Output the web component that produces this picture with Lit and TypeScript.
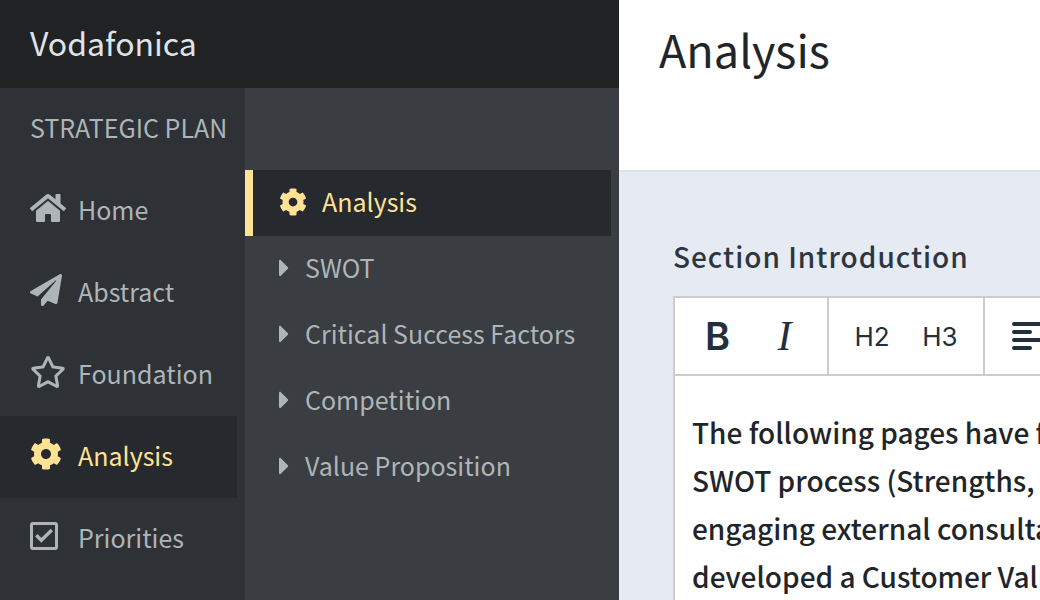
import { LitElement, html, svg, css } from "lit";
import { customElement, property } from "lit/decorators.js";
import { classMap } from "lit/directives/class-map.js";

const icons = {
  home: {
    box: "0 0 576 512",
    shape: svg`<path d="M280.37 148.26L96 300.11V464a16 16 0 0 0 16 16l112.06-.29a16 16 0 0 0 15.92-16V368a16 16 0 0 1 16-16h64a16 16 0 0 1 16 16v95.64a16 16 0 0 0 16 16.05L464 480a16 16 0 0 0 16-16V300L295.67 148.26a12.19 12.19 0 0 0-15.3 0zM571.6 251.47L488 182.56V44.05a12 12 0 0 0-12-12h-56a12 12 0 0 0-12 12v72.61L318.47 43a48 48 0 0 0-61 0L4.34 251.47a12 12 0 0 0-1.6 16.9l25.5 31A12 12 0 0 0 45.15 301l235.22-193.74a12.19 12.19 0 0 1 15.3 0L530.9 301a12 12 0 0 0 16.9-1.6l25.5-31a12 12 0 0 0-1.7-16.93z"/>`,
  },
  plane: {
    box: "0 0 512 512",
    shape: svg`<path d="M476 3.2L12.5 270.6c-18.1 10.4-15.8 35.6 2.2 43.2L121 358.4l287.3-253.2c5.5-4.9 13.3 2.6 8.6 8.3L176 407v80.5c0 23.6 28.5 32.9 42.5 15.8L282 426l124.6 52.2c14.2 6 30.4-2.9 33-18.2l72-432C515 7.8 493.3-6.8 476 3.2z"/>`,
  },
  star: {
    box: "0 0 576 512",
    shape: svg`<path d="M528.1 171.5L382 150.2 316.7 17.8c-11.7-23.6-45.6-23.9-57.4 0L194 150.2 47.9 171.5c-26.2 3.8-36.7 36.1-17.7 54.6l105.7 103-25 145.5c-4.5 26.3 23.2 46 46.4 33.7L288 439.6l130.7 68.7c23.2 12.2 50.9-7.4 46.4-33.7l-25-145.5 105.7-103c19-18.5 8.5-50.8-17.7-54.6zM388.6 312.3l23.7 138.4L288 385.4l-124.3 65.3 23.7-138.4-100.6-98 139-20.2 62.2-126 62.2 126 139 20.2-100.6 98z"/>`,
  },
  cog: {
    box: "0 0 512 512",
    shape: svg`<path d="M487.4 315.7l-42.6-24.6c4.3-23.2 4.3-47 0-70.2l42.6-24.6c4.9-2.8 7.1-8.6 5.5-14-11.1-35.6-30-67.8-54.7-94.6-3.8-4.1-10-5.1-14.8-2.3L380.8 110c-17.9-15.4-38.5-27.3-60.8-35.1V25.8c0-5.6-3.9-10.5-9.4-11.7-36.7-8.2-74.3-7.8-109.2 0-5.5 1.2-9.4 6.1-9.4 11.7V75c-22.2 7.9-42.8 19.8-60.8 35.1L88.7 85.5c-4.9-2.8-11-1.9-14.8 2.3-24.7 26.7-43.6 58.9-54.7 94.6-1.7 5.4.6 11.2 5.5 14L67.3 221c-4.3 23.2-4.3 47 0 70.2l-42.6 24.6c-4.9 2.8-7.1 8.6-5.5 14 11.1 35.6 30 67.8 54.7 94.6 3.8 4.1 10 5.1 14.8 2.3l42.6-24.6c17.9 15.4 38.5 27.3 60.8 35.1v49.2c0 5.6 3.9 10.5 9.4 11.7 36.7 8.2 74.3 7.8 109.2 0 5.5-1.2 9.4-6.1 9.4-11.7v-49.2c22.2-7.9 42.8-19.8 60.8-35.1l42.6 24.6c4.9 2.8 11 1.9 14.8-2.3 24.7-26.7 43.6-58.9 54.7-94.6 1.5-5.5-.7-11.3-5.6-14.1zM256 336c-44.1 0-80-35.9-80-80s35.9-80 80-80 80 35.9 80 80-35.9 80-80 80z"/>`,
  },
  check: {
    box: "0 0 32 32",
    shape: svg`<g fill="none" stroke="currentColor" stroke-width="3"><rect x="1.5" y="3.5" width="25" height="25" rx="1.5"/><path d="M6.3 15.3l5 5L21.8 10" stroke-width="3.4"/></g>`,
  },
  caret: {
    box: "0 0 192 512",
    shape: svg`<path d="M0 384.662V127.338c0-17.818 21.543-26.741 34.142-14.142l128.662 128.662c7.81 7.81 7.81 20.474 0 28.284L34.142 398.804C21.543 411.404 0 402.48 0 384.662z"/>`,
  },
  left: {
    box: "0 0 32 28",
    shape: svg`<path fill="none" stroke="currentColor" stroke-width="4" stroke-linecap="round" d="M2 2h28M2 10h16M2 18h28M2 26h16"/>`,
  },
};

type IconName = keyof typeof icons;

@customElement("app-icon")
class AppIcon extends LitElement {
  @property() name: IconName = "home";

  static styles = css`
    :host {
      display: block;
      height: 32px;
    }
    .glyph {
      display: block;
      height: 100%;
      width: auto;
      fill: currentColor;
    }
  `;

  render() {
    const icon = icons[this.name];
    return html`<svg class="glyph" viewBox=${icon.box} aria-hidden="true">${icon.shape}</svg>`;
  }
}

const sections: { label: string; icon: IconName; active?: boolean }[] = [
  { label: "Home", icon: "home" },
  { label: "Abstract", icon: "plane" },
  { label: "Foundation", icon: "star" },
  { label: "Analysis", icon: "cog", active: true },
  { label: "Priorities", icon: "check" },
];

const pages: { label: string; active?: boolean }[] = [
  { label: "Analysis", active: true },
  { label: "SWOT" },
  { label: "Critical Success Factors" },
  { label: "Competition" },
  { label: "Value Proposition" },
];

const introduction = [
  "The following pages have followed a",
  "SWOT process (Strengths, Weaknesses),",
  "engaging external consultants, and",
  "developed a Customer Value Proposition.",
].join("\n");

@customElement("app-root")
class AppRoot extends LitElement {
  static styles = css`
    :host {
      display: grid;
      grid-template-columns: auto minmax(0, 1fr);
      height: 100vh;
      overflow: hidden;
      font-family: "Noto Sans CJK SC", "Noto Sans", sans-serif;
      font-size: 25px;
      line-height: 40px;
      color: #212529;
    }
    * {
      box-sizing: border-box;
    }
    .side {
      display: grid;
      grid-template-columns: 245px 374px;
      grid-template-rows: 88px 1fr;
      min-height: 0;
      color: #adb5b9;
    }
    .brand {
      grid-column: 1 / -1;
      display: flex;
      align-items: center;
      padding: 0 30px 4px;
      background: #212223;
      color: #dee4e7;
      font-size: 32px;
      text-decoration: none;
    }
    .sections {
      background: #2e3136;
    }
    .pages {
      background: #3a3d41;
      padding-top: 82px;
    }
    .caption {
      margin: 0;
      padding: 19px 0 23px 30px;
      font-size: 25px;
      font-weight: 400;
      white-space: nowrap;
    }
    .list {
      list-style: none;
      margin: 0;
      padding: 0 8px 0 0;
    }
    .link {
      display: flex;
      align-items: center;
      padding-bottom: 4px;
      color: inherit;
      text-decoration: none;
      white-space: nowrap;
    }
    .section {
      height: 82px;
      padding-left: 30px;
    }
    .section .mark {
      width: 48px;
      padding-bottom: 2px;
    }
    .page {
      height: 66px;
      padding-left: 26px;
      border-left: 8px solid transparent;
    }
    .page .mark {
      width: 26px;
      padding-top: 2px;
    }
    .page.active .mark {
      width: 43px;
    }
    .page app-icon {
      height: 28px;
    }
    .active {
      background: #26292e;
      border-color: #ffe294;
      color: #ffe294;
    }
    .main {
      display: flex;
      flex-direction: column;
      min-width: 0;
      min-height: 0;
      overflow: hidden;
      background: #e6eaf2;
    }
    .top {
      height: 172px;
      flex: none;
      padding: 19px 40px;
      background: #fff;
      border-bottom: 2px solid #dee2e6;
    }
    .title {
      margin: 0;
      font-size: 45px;
      line-height: 60px;
      font-weight: 400;
    }
    .content {
      flex: 1;
      display: flex;
      flex-direction: column;
      min-width: 720px;
      padding: 64px 54px 0;
    }
    .label {
      padding-bottom: 20px;
      font-size: 28px;
      font-weight: 500;
      letter-spacing: 1px;
      color: #2d3640;
    }
    .editor {
      flex: 1;
      display: flex;
      flex-direction: column;
      border: 2px solid #ccc;
      border-bottom: 0;
      background: #fff;
    }
    .toolbar {
      display: flex;
      height: 78px;
      flex: none;
      border-bottom: 2px solid #ccc;
      color: #232f3f;
    }
    .group {
      display: flex;
      align-items: stretch;
      padding: 0 9px;
      border-right: 2px solid #ccc;
    }
    .tool {
      display: flex;
      align-items: center;
      justify-content: center;
      width: 68px;
      padding: 0;
      border: 0;
      background: none;
      color: inherit;
      font: 26px Inter, sans-serif;
    }
    .bold {
      width: 67px;
      font: 600 38px Inter, sans-serif;
    }
    .italic {
      width: 67px;
      font: italic 42px "Liberation Serif", serif;
    }
    .tool app-icon {
      height: 28px;
    }
    .text {
      flex: 1;
      width: 100%;
      padding: 32px 17px 0;
      border: 0;
      outline: 0;
      resize: none;
      overflow: hidden;
      background: none;
      color: inherit;
      font: inherit;
      font-size: 28px;
      font-weight: 500;
      line-height: 48px;
    }
  `;

  render() {
    return html`
      <div class="side">
        <a class="brand" href="#">Vodafonica</a>
        <nav class="sections" aria-label="Strategic plan">
          <h2 class="caption">STRATEGIC PLAN</h2>
          <ul class="list">
            ${sections.map(
              (s) => html`<li>
                <a class=${classMap({ link: true, section: true, active: !!s.active })} href="#">
                  <span class="mark"><app-icon name=${s.icon}></app-icon></span>${s.label}
                </a>
              </li>`
            )}
          </ul>
        </nav>
        <nav class="pages" aria-label="Analysis">
          <ul class="list">
            ${pages.map(
              (p) => html`<li>
                <a class=${classMap({ link: true, page: true, active: !!p.active })} href="#">
                  <span class="mark"><app-icon name=${p.active ? "cog" : "caret"}></app-icon></span>${p.label}
                </a>
              </li>`
            )}
          </ul>
        </nav>
      </div>
      <main class="main">
        <header class="top"><h1 class="title">Analysis</h1></header>
        <div class="content">
          <label class="label" for="introduction">Section Introduction</label>
          <div class="editor">
            <div class="toolbar" role="toolbar">
              <div class="group">
                <button class="tool bold" type="button">B</button>
                <button class="tool italic" type="button">I</button>
              </div>
              <div class="group">
                <button class="tool" type="button">H2</button>
                <button class="tool" type="button">H3</button>
              </div>
              <div class="group">
                <button class="tool" type="button" aria-label="Align left"><app-icon name="left"></app-icon></button>
              </div>
            </div>
            <textarea class="text" id="introduction" spellcheck="false" .value=${introduction}></textarea>
          </div>
        </div>
      </main>
    `;
  }
}
